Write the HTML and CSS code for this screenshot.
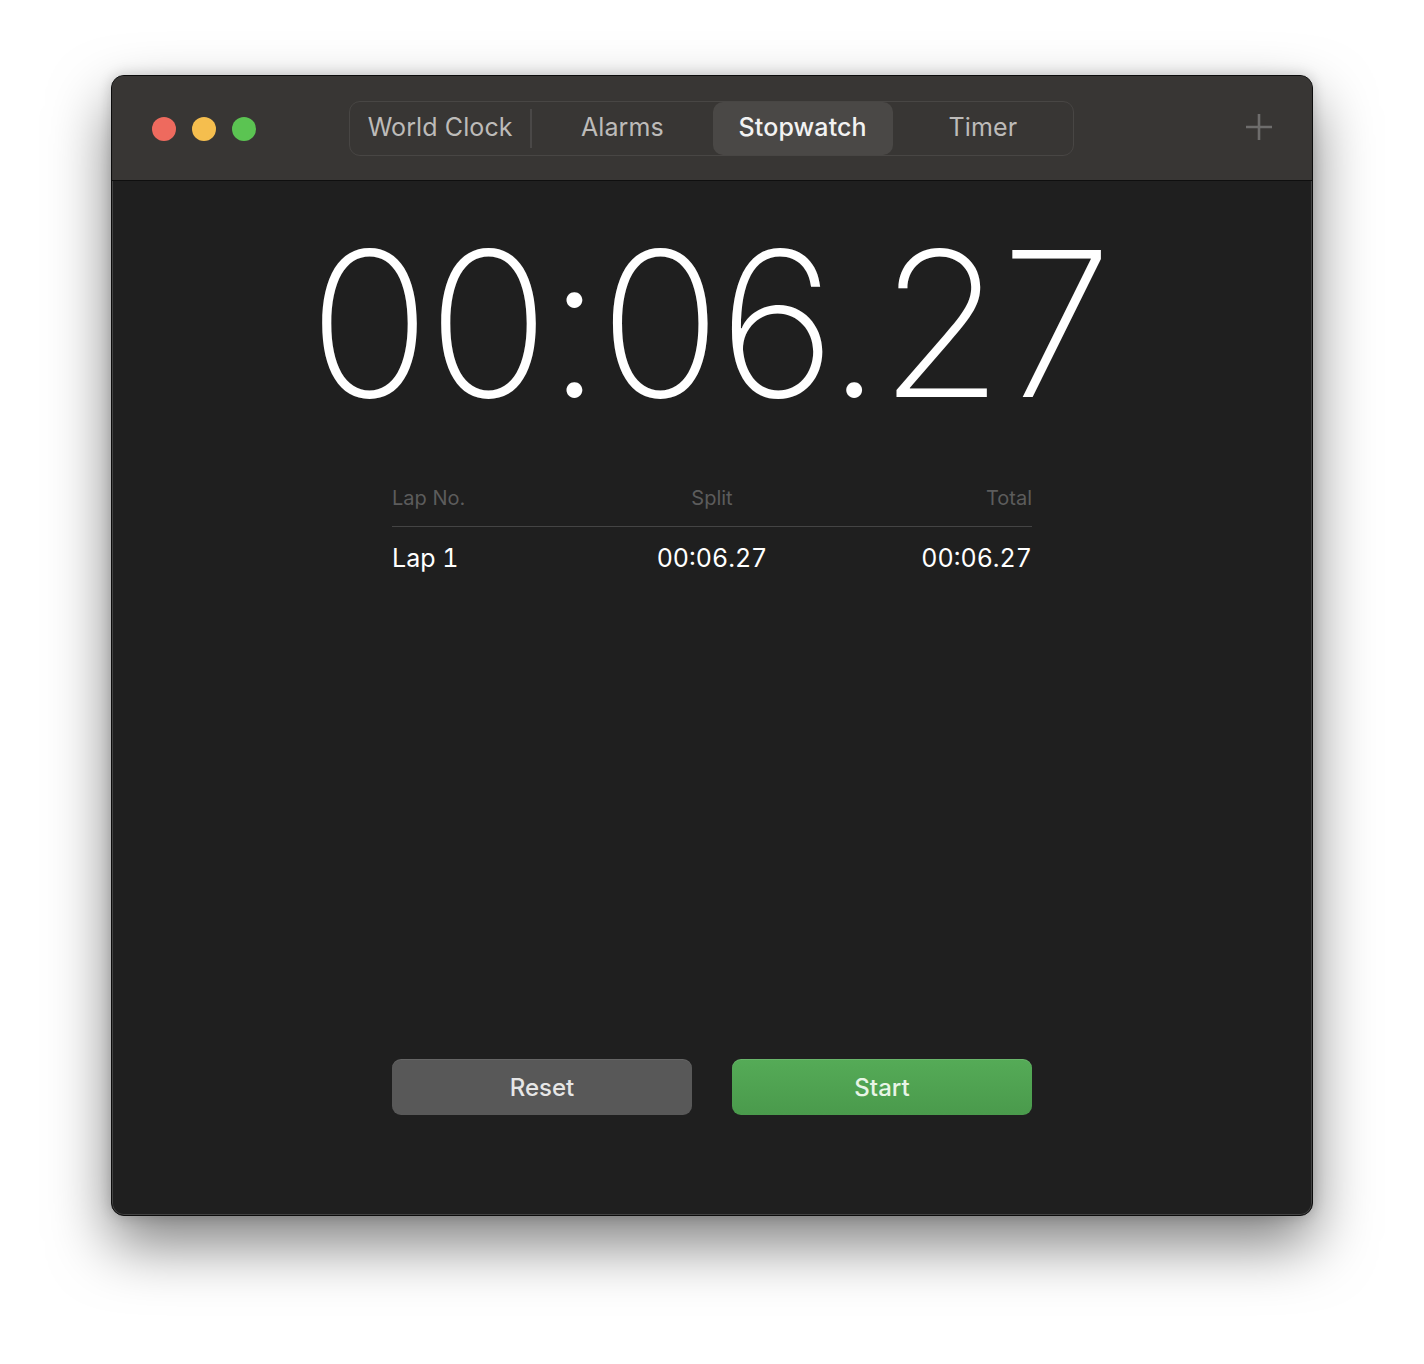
FILE: index.html
```html
<!DOCTYPE html>
<html lang="en">
<head>
<meta charset="utf-8">
<title>Clock — Stopwatch</title>
<link rel="stylesheet" href="styles.css">
</head>
<body>
<div class="window">
  <header class="titlebar">
    <div class="lights">
      <span class="light red"></span>
      <span class="light yellow"></span>
      <span class="light green"></span>
    </div>
    <nav class="tabs">
      <span class="tab">World Clock</span>
      <span class="sep"></span>
      <span class="tab">Alarms</span>
      <span class="tab active">Stopwatch</span>
      <span class="tab">Timer</span>
    </nav>
    <svg class="plus" width="28" height="28" viewBox="0 0 28 28"><path d="M14 1v26M1 14h26" stroke="#6e6d6c" stroke-width="2.6" fill="none"/></svg>
  </header>
  <main class="content">
    <div class="time">00:06.27</div>
    <div class="laps">
      <div class="row head">
        <span class="c1">Lap No.</span>
        <span class="c2">Split</span>
        <span class="c3">Total</span>
      </div>
      <div class="row lap">
        <span class="c1">Lap 1</span>
        <span class="c2">00:06.27</span>
        <span class="c3">00:06.27</span>
      </div>
    </div>
    <div class="buttons">
      <button class="btn reset">Reset</button>
      <button class="btn start">Start</button>
    </div>
  </main>
</div>
</body>
</html>
```

FILE: styles.css
```css
html, body {
  margin: 0;
  padding: 0;
  background: #ffffff;
}
body {
  padding-top: 75px;
  height: 1364px;
  box-sizing: border-box;
  font-family: Inter, "Noto Sans", sans-serif;
}
.window {
  width: 1202px;
  height: 1141px;
  margin: 0 auto;
  box-sizing: border-box;
  border: 1px solid #0c0c0c;
  border-radius: 13px;
  overflow: hidden;
  background: #1f1f1f;
  display: flex;
  flex-direction: column;
  box-shadow: inset 0 0 0 1px rgba(255,255,255,0.16), 0 28px 60px rgba(0,0,0,0.5), 0 0 14px rgba(0,0,0,0.18);
}
.titlebar {
  height: 105px;
  flex: none;
  box-sizing: border-box;
  background: #383634;
  border-bottom: 1px solid #0f0f0f;
  display: flex;
  align-items: center;
  padding: 0 39px 0 40px;
}
.lights {
  display: flex;
  gap: 16px;
  margin-top: 1px;
}
.light {
  width: 24px;
  height: 24px;
  border-radius: 50%;
}
.red { background: #ee6a5e; }
.yellow { background: #f5be4e; }
.green { background: #5bc452; }
.tabs {
  margin-left: 93px;
  width: 725px;
  height: 55px;
  box-sizing: border-box;
  border: 1px solid #484644;
  border-radius: 11px;
  display: flex;
  align-items: stretch;
  margin-top: 1px;
}
.tab {
  flex: 1;
  display: flex;
  align-items: center;
  justify-content: center;
  font-size: 25px;
  color: #bdbbb9;
  letter-spacing: 0.1px;
  padding-bottom: 3px;
}
.tab.active {
  background: #4a4846;
  border-radius: 10px;
  color: #f2f2f2;
  font-weight: 500;
}
.sep {
  width: 2px;
  background: #4a4847;
  margin: 7px 0;
  flex: none;
}
.plus {
  margin-left: auto;
  margin-top: -2px;
}
.content {
  flex: 1;
  display: flex;
  flex-direction: column;
  align-items: center;
}
.time {
  margin-top: 42px;
  font-size: 202px;
  font-weight: 200;
  color: #ffffff;
  line-height: 1;
  letter-spacing: -3px;
  white-space: nowrap;
  padding-right: 6px;
}
.laps {
  width: 640px;
  margin-top: 48px;
}
.row {
  display: grid;
  grid-template-columns: 1fr 1fr 1fr;
  align-items: center;
}
.c1 { text-align: left; }
.c2 { text-align: center; }
.c3 { text-align: right; }
.head {
  font-size: 20px;
  color: #5c5c5c;
  height: 54px;
  border-bottom: 1px solid #444444;
  padding-bottom: 4px;
  box-sizing: border-box;
}
.lap {
  font-size: 25px;
  color: #ffffff;
  height: 62px;
  font-variant-numeric: tabular-nums;
}
.buttons {
  margin-top: auto;
  margin-bottom: 100px;
  display: flex;
  gap: 40px;
}
.btn {
  width: 300px;
  height: 56px;
  border: none;
  border-radius: 9px;
  font-family: Inter, "Noto Sans", sans-serif;
  font-size: 24px;
  font-weight: 500;
}
.reset {
  background: #585858;
  color: #e6e6e6;
  box-shadow: inset 0 1px 0 rgba(255,255,255,0.08);
}
.start {
  background: linear-gradient(#55ab57, #4a9a4c);
  color: #e8f5e6;
  box-shadow: inset 0 1px 0 rgba(255,255,255,0.12);
}
```
